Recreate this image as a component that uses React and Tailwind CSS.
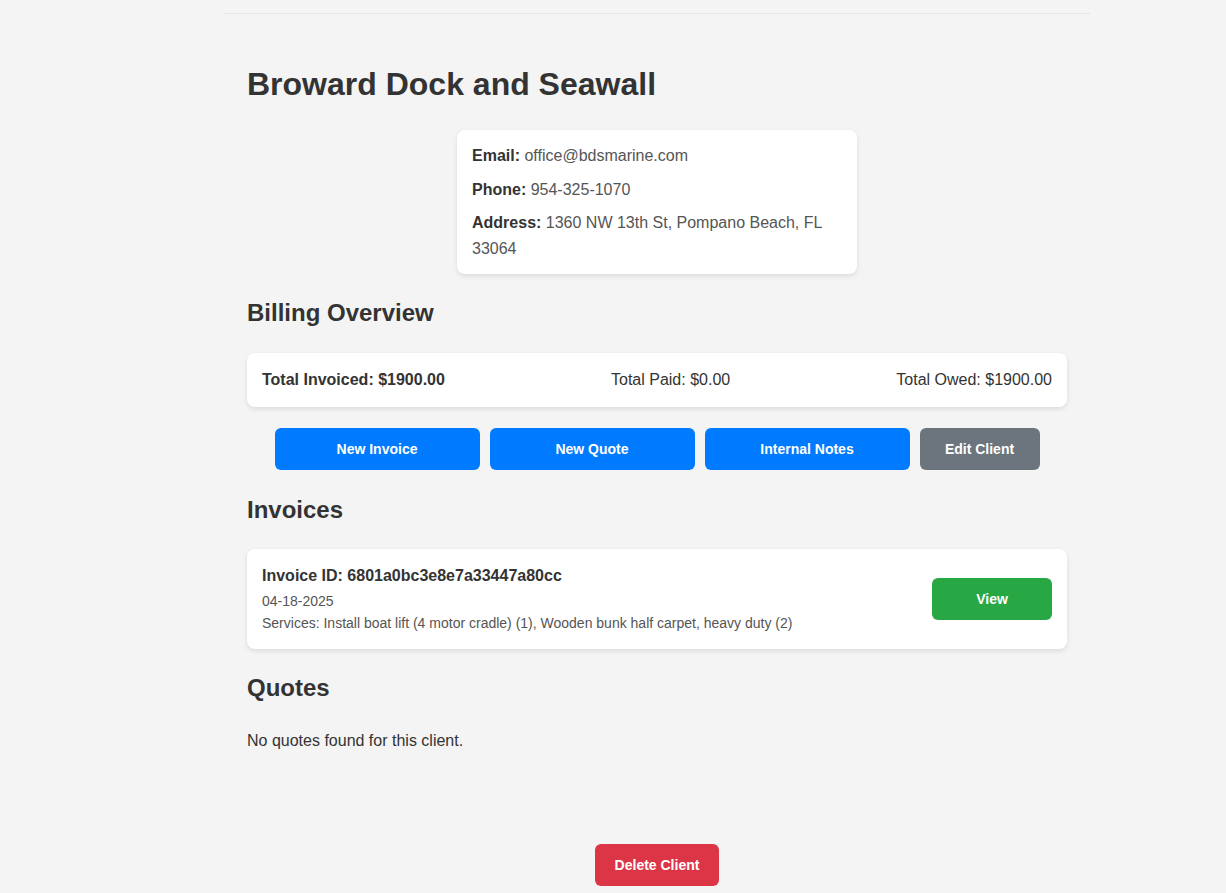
export default function App() {
  const font = { fontFamily: '"Liberation Sans", Arial, sans-serif' };
  return (
    <div className="min-h-[893px] bg-[#f4f4f4] text-[#333] pl-[88px]" style={font}>
      <div className="mx-auto w-[866px] h-[14px] border-b border-[#e6e6e6]" />
      <div className="mx-auto w-[820px] pt-[51px] pb-[7px]">
        <h1 className="text-[32px] leading-[38px] font-bold">Broward Dock and Seawall</h1>

        <div className="mx-auto mt-[27px] w-[400px] bg-white rounded-lg shadow-[0_2px_5px_rgba(0,0,0,0.1)] px-[15px] py-[13px] text-base leading-[25.6px] text-[#555]">
          <p className="mb-2"><span className="font-bold text-[#333]">Email:</span> office@bdsmarine.com</p>
          <p className="mb-2"><span className="font-bold text-[#333]">Phone:</span> 954-325-1070</p>
          <p><span className="font-bold text-[#333]">Address:</span> 1360 NW 13th St, Pompano Beach, FL 33064</p>
        </div>

        <h2 className="mt-[24px] text-2xl leading-[29px] font-bold">Billing Overview</h2>

        <div className="mt-[26px] bg-white rounded-lg shadow-[0_2px_5px_rgba(0,0,0,0.1)] px-[15px] py-[15px] flex justify-between text-base leading-6">
          <span className="font-bold">Total Invoiced: $1900.00</span>
          <span>Total Paid: $0.00</span>
          <span>Total Owed: $1900.00</span>
        </div>

        <div className="mt-[21px] flex justify-center gap-[10px]">
          <button className="w-[205px] h-[42px] rounded-md bg-[#007bff] text-white text-sm font-bold">New Invoice</button>
          <button className="w-[205px] h-[42px] rounded-md bg-[#007bff] text-white text-sm font-bold">New Quote</button>
          <button className="w-[205px] h-[42px] rounded-md bg-[#007bff] text-white text-sm font-bold">Internal Notes</button>
          <button className="w-[120px] h-[42px] rounded-md bg-[#6c757d] text-white text-sm font-bold">Edit Client</button>
        </div>

        <h2 className="mt-[25px] text-2xl leading-[29px] font-bold">Invoices</h2>

        <div className="mt-[25px] bg-white rounded-lg shadow-[0_2px_5px_rgba(0,0,0,0.1)] p-[15px] flex items-center justify-between">
          <div>
            <div className="text-base leading-6 font-bold mb-[3px]">Invoice ID: 6801a0bc3e8e7a33447a80cc</div>
            <div className="text-sm leading-[21px] text-[#555] mb-px">04-18-2025</div>
            <div className="text-sm leading-[21px] text-[#555]">Services: Install boat lift (4 motor cradle) (1), Wooden bunk half carpet, heavy duty (2)</div>
          </div>
          <button className="w-[120px] h-[42px] rounded-md bg-[#28a745] text-white text-sm font-bold">View</button>
        </div>

        <h2 className="mt-[24px] text-2xl leading-[29px] font-bold">Quotes</h2>

        <p className="mt-[27px] text-base leading-6">No quotes found for this client.</p>

        <div className="mt-[91px] flex justify-center">
          <button className="w-[124px] h-[42px] rounded-md bg-[#dc3545] text-white text-sm font-bold">Delete Client</button>
        </div>
      </div>
    </div>
  );
}
